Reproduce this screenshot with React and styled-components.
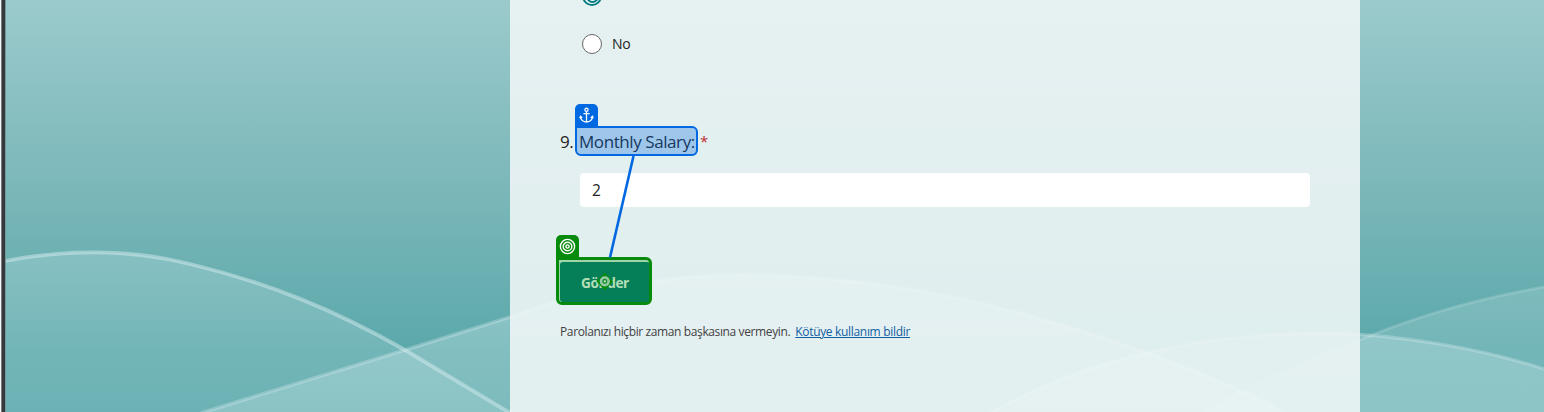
import React from 'react';
import styled, { createGlobalStyle } from 'styled-components';

const GlobalStyle = createGlobalStyle`
  * { box-sizing: border-box; }
  body { margin: 0; overflow: hidden; }
`;

const Page = styled.div`
  position: relative;
  display: flex;
  width: 1544px;
  height: 412px;
  overflow: hidden;
  font-family: 'Open Sans', 'Noto Sans', sans-serif;
  color: #242424;
  background: linear-gradient(180deg, #9bcacc 0, #7bb7b9 190px, #6bb0b2 270px, #5ba8ab 350px, #58a6a9 412px);
`;

const Waves = styled.svg`
  position: absolute;
  inset: 0;
`;

const WindowEdge = styled.div`
  position: relative;
  width: 6px;
  margin-right: 504px;
  background: linear-gradient(90deg, #f4f8f8 0 1px, #777d80 1px 2px, #37383b 2px 5px, #6f9b9e 5px 6px);
`;

const FormPanel = styled.main`
  position: relative;
  width: 850px;
  padding: 0 50px;
  background: rgba(239, 246, 246, 0.89);
`;

const ChoiceList = styled.div`
  display: flex;
  flex-direction: column;
  gap: 28px;
  margin-top: -14px;
  padding-left: 22px;
`;

const Choice = styled.label`
  display: flex;
  align-items: center;
  gap: 10px;
  height: 20px;
  font-size: 14px;
  line-height: 18px;
  letter-spacing: -0.2px;
`;

const Radio = styled.span`
  display: grid;
  place-items: center;
  width: 20px;
  height: 20px;
  border-radius: 50%;
  background: #fff;
  border: ${(p) => (p.$checked ? '2px solid #037c81' : '1px solid #666')};
`;

const RadioDot = styled.span`
  width: 13px;
  height: 13px;
  border: 2px solid #037c81;
  border-radius: 50%;
`;

const Question = styled.div`
  display: flex;
  align-items: center;
  height: 30px;
  margin-top: 72px;
  font-size: 17px;
  letter-spacing: -0.42px;
`;

const QuestionNumber = styled.span`
  width: 19px;
  white-space: nowrap;
`;

const QuestionTitle = styled.span`
  width: 121px;
  padding-top: 1px;
  white-space: nowrap;
`;

const Required = styled.span`
  color: #bc2f32;
  font-size: 15px;
`;

const Answer = styled.div`
  display: flex;
  align-items: center;
  width: 730px;
  height: 34px;
  margin: 17px 0 0 20px;
  padding: 0 12px 1px;
  border-radius: 4px;
  background: #fff;
  font-size: 15.5px;
`;

const SubmitButton = styled.button`
  display: block;
  width: 90px;
  height: 40px;
  margin-top: 55px;
  padding: 0;
  border: 0;
  border-radius: 3px;
  background: #037679;
  color: #fff;
  font: 700 13.6px 'Open Sans', sans-serif;
  letter-spacing: -0.35px;
`;

const Footer = styled.p`
  display: flex;
  gap: 5px;
  margin: 21px 0 0;
  font-size: 12px;
  letter-spacing: -0.38px;
  line-height: 17px;
  color: #424242;
  white-space: nowrap;
`;

const ReportLink = styled.a`
  color: #115ea3;
  letter-spacing: -0.32px;
  text-decoration: underline;
`;

const tones = {
  anchor: { line: '#0068e1', fill: 'rgba(0, 104, 225, 0.3)' },
  target: { line: '#078b0c', fill: 'rgba(8, 150, 12, 0.3)' },
};

const Marker = styled.div`
  position: absolute;
  left: ${(p) => p.$x}px;
  top: ${(p) => p.$y}px;
  width: ${(p) => p.$w}px;
  height: ${(p) => p.$h}px;
  border: ${(p) => (p.$tone === 'target' ? 3 : 2)}px solid ${(p) => tones[p.$tone].line};
  border-radius: 1px 6px 6px 6px;
  background: ${(p) => tones[p.$tone].fill};
`;

const MarkerTab = styled.div`
  position: absolute;
  left: ${(p) => p.$x}px;
  top: ${(p) => p.$y}px;
  display: grid;
  place-items: center;
  width: 23px;
  height: 23px;
  border-radius: 5px 5px 0 0;
  background: ${(p) => tones[p.$tone].line};
`;

const Overlay = styled.svg`
  position: absolute;
  inset: 0;
`;

const leftHill = 'M5 261 C64 249 132 249 190 264 C269 283 335 310 405 350 L510 413';
const middleHill = 'M201 413 L405 350 L510 317 C590 287 665 275 743 275 C890 276 1020 307 1147 353 C1200 372 1245 391 1284 413';
const rightHill = 'M990 413 C1035 388 1088 366 1147 353 C1210 337 1275 333 1330 333 C1400 335 1480 348 1544 369';
const farHill = 'M1204 413 C1250 386 1303 362 1372 335 C1430 312 1487 297 1544 287';

function Fade({ id, from, to, start, end }) {
  return (
    <linearGradient id={id} gradientUnits="userSpaceOnUse" x1="0" x2="0" y1={from} y2={to}>
      <stop offset="0" stopColor="#d6eeef" stopOpacity={start} />
      <stop offset="1" stopColor="#d6eeef" stopOpacity={end} />
    </linearGradient>
  );
}

function Background() {
  return (
    <Waves width="1544" height="412" viewBox="0 0 1544 412">
      <defs>
        <Fade id="leftFade" from="250" to="412" start=".24" end=".16" />
        <Fade id="middleFade" from="275" to="412" start=".36" end=".29" />
        <Fade id="rightFade" from="333" to="412" start=".29" end=".28" />
        <Fade id="farFade" from="287" to="412" start=".2" end=".19" />
      </defs>
      <path d={leftHill + ' L5 413 Z'} fill="url(#leftFade)" />
      <path d={middleHill + ' Z'} fill="url(#middleFade)" />
      <path d={rightHill + ' V413 Z'} fill="url(#rightFade)" />
      <path d={farHill + ' V413 Z'} fill="url(#farFade)" />
      <g fill="none" stroke="#dcf0f1" strokeWidth="3.8">
        <path d={leftHill} strokeOpacity=".46" />
        <path d={middleHill} strokeOpacity=".31" />
        <path d={rightHill} strokeOpacity=".31" strokeWidth="3.4" />
        <path d={farHill} strokeOpacity=".2" strokeWidth="3" />
      </g>
    </Waves>
  );
}

function AnchorIcon() {
  return (
    <svg width="15" height="17" viewBox="0 0 15 17" fill="none" stroke="#fff" strokeWidth="1.3">
      <circle cx="7.5" cy="2.8" r="1.6" />
      <path d="M7.5 4.5V15M4.4 6.6H10.6M1.4 9.8C1.7 13 4.2 14.7 7.5 15C10.8 14.7 13.3 13 13.6 9.8M.8 11.2L1.5 9.4L3.3 10.8M14.2 11.2L13.5 9.4L11.7 10.8" />
    </svg>
  );
}

function TargetIcon() {
  return (
    <svg width="17" height="17" viewBox="0 0 17 17" fill="none" stroke="#fff" strokeWidth="1.4">
      <circle cx="8.5" cy="8.5" r="7.1" />
      <circle cx="8.5" cy="8.5" r="4.3" />
      <circle cx="8.5" cy="8.5" r="1.6" />
    </svg>
  );
}

export default function App() {
  return (
    <Page>
      <GlobalStyle />
      <Background />
      <WindowEdge />
      <FormPanel>
        <ChoiceList>
          <Choice><Radio $checked><RadioDot /></Radio></Choice>
          <Choice><Radio />No</Choice>
        </ChoiceList>
        <Question>
          <QuestionNumber>9.</QuestionNumber>
          <QuestionTitle>Monthly Salary:</QuestionTitle>
          <Required>*</Required>
        </Question>
        <Answer>2</Answer>
        <SubmitButton>Gönder</SubmitButton>
        <Footer>
          <span>Parolanızı hiçbir zaman başkasına vermeyin.</span>
          <ReportLink>Kötüye kullanım bildir</ReportLink>
        </Footer>
      </FormPanel>
      <Marker $tone="anchor" $x={575} $y={126} $w={123} $h={30} />
      <MarkerTab $tone="anchor" $x={575} $y={104}><AnchorIcon /></MarkerTab>
      <Marker $tone="target" $x={556} $y={257} $w={96} $h={48} />
      <MarkerTab $tone="target" $x={556} $y={235}><TargetIcon /></MarkerTab>
      <Overlay width="1544" height="412" viewBox="0 0 1544 412">
        <path d="M633.5 156L610 257.5" stroke="#0068e1" strokeWidth="2.6" />
        <path d="M604.8 272.8L613.2 281.5L604.8 290.2L596.4 281.5Z" fill="#078b0c" />
        <circle cx="604.8" cy="281.3" r="3.8" fill="#168c2b" stroke="#94c9a8" strokeWidth="2.6" />
        <circle cx="604.8" cy="281.3" r="1.1" fill="#d4ecd6" />
      </Overlay>
    </Page>
  );
}
